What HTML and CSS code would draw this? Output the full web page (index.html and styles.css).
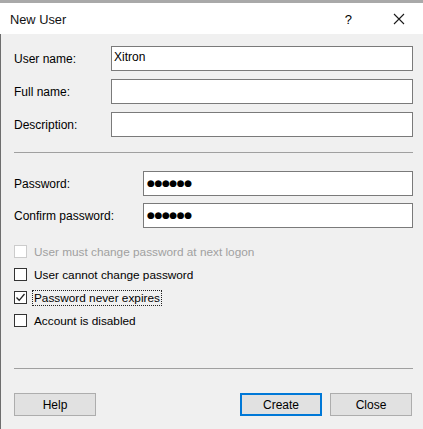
FILE: index.html
```html
<!DOCTYPE html>
<html>
    <head>
        <title>New User</title>
        <link rel="stylesheet" href="styles.css">
    </head>
    <body>
        <div class='backStrip'></div>
        <div class='dialog'>
            <div class='titleBar'>
                <span class='titleText'>New User</span>
                <span class='helpMark'>?</span>
                <svg class='closeX' viewBox='0 0 12 12' width='12' height='12'>
                    <path d='M1 1L11 11M11 1L1 11' stroke='#1a1a1a' stroke-width='1.1' fill='none'/>
                </svg>
            </div>
            <div class='client'>
                <div class='fieldGroup'>
                    <div class='fieldRow'>
                        <label class='fieldLabel nameCol'>User name:</label>
                        <div class='textBox'>Xitron</div>
                    </div>
                    <div class='fieldRow'>
                        <label class='fieldLabel nameCol'>Full name:</label>
                        <div class='textBox'></div>
                    </div>
                    <div class='fieldRow'>
                        <label class='fieldLabel nameCol'>Description:</label>
                        <div class='textBox'></div>
                    </div>
                </div>
                <div class='separator topSep'></div>
                <div class='fieldGroup passGroup'>
                    <div class='fieldRow'>
                        <label class='fieldLabel passCol'>Password:</label>
                        <div class='textBox passBox'><span class='dots'>●●●●●●</span></div>
                    </div>
                    <div class='fieldRow'>
                        <label class='fieldLabel passCol'>Confirm password:</label>
                        <div class='textBox passBox'><span class='dots'>●●●●●●</span></div>
                    </div>
                </div>
                <div class='checkList'>
                    <div class='checkRow disabled'>
                        <span class='checkBox'></span>
                        <span class='checkText'>User must change password at next logon</span>
                    </div>
                    <div class='checkRow'>
                        <span class='checkBox'></span>
                        <span class='checkText'>User cannot change password</span>
                    </div>
                    <div class='checkRow'>
                        <span class='checkBox'>
                            <svg viewBox='0 0 11 11' width='11' height='11'>
                                <path d='M1.5 5.5L4.2 8.3L9.5 2' stroke='#222' stroke-width='1.3' fill='none'/>
                            </svg>
                        </span>
                        <span class='checkText focused'>Password never expires</span>
                    </div>
                    <div class='checkRow'>
                        <span class='checkBox'></span>
                        <span class='checkText'>Account is disabled</span>
                    </div>
                </div>
                <div class='separator bottomSep'></div>
                <div class='buttonRow'>
                    <button class='winButton'>Help</button>
                    <div class='spacer'></div>
                    <button class='winButton defaultButton'>Create</button>
                    <button class='winButton'>Close</button>
                </div>
            </div>
        </div>
    </body>
</html>
```

FILE: styles.css
```css
html, body {
    margin: 0;
    width: 100%;
    height: 100%;
    background-color: #f0f0f0;
    font-family: "Liberation Sans", Arial, sans-serif;
    font-size: 12px;
    color: #000;
}
.backStrip {
    height: 3px;
    background-color: #a9a9a9;
}
.dialog {
    height: calc(100% - 3px);
    display: flex;
    flex-direction: column;
}
.titleBar {
    height: 31px;
    background-color: #fff;
    display: flex;
    align-items: center;
    padding-left: 10px;
    padding-right: 18px;
}
.titleText {
    flex-grow: 1;
    font-size: 12.8px;
    color: #111;
    margin-top: 2px;
}
.helpMark {
    font-size: 13px;
    margin-right: 41px;
    margin-top: 1px;
}
.closeX {
    margin-top: 1px;
}
.client {
    flex-grow: 1;
    border-left: 1px solid #6e6e6e;
    padding: 12px 10px 0 12px;
}
.fieldGroup {
    display: flex;
    flex-direction: column;
    gap: 8px;
}
.passGroup {
    gap: 7px;
}
.fieldRow {
    display: flex;
    align-items: center;
}
.fieldLabel {
    padding-left: 1px;
    box-sizing: border-box;
}
.nameCol {
    width: 98px;
}
.passCol {
    width: 130px;
}
.textBox {
    flex-grow: 1;
    height: 25px;
    box-sizing: border-box;
    border: 1px solid #7a7a7a;
    background-color: #fff;
    padding: 3px 0 0 2px;
    font-size: 12px;
}
.passBox {
    padding: 2px 0 0 3px;
}
.dots {
    font-family: "DejaVu Sans", sans-serif;
    font-size: 9px;
    letter-spacing: -0.4px;
    color: #000;
    position: relative;
    top: 1px;
}
.separator {
    height: 1px;
    background-color: #a0a0a0;
}
.topSep {
    margin: 15px 0 18px 1px;
}
.checkList {
    margin-top: 12px;
    font-size: 11.8px;
}
.checkRow {
    height: 23px;
    display: flex;
    align-items: center;
}
.checkBox {
    width: 13px;
    height: 13px;
    box-sizing: border-box;
    border: 1px solid #333;
    background-color: #fff;
    margin-left: 1px;
    margin-right: 5px;
    display: flex;
    align-items: center;
    justify-content: center;
}
.checkText {
    padding: 0 1px;
    border: 1px dotted transparent;
}
.checkText.focused {
    border-color: #222;
}
.disabled .checkBox {
    border-color: #cccccc;
}
.disabled .checkText {
    color: #a0a0a0;
}
.bottomSep {
    margin: 36px 0 24px 1px;
}
.buttonRow {
    display: flex;
    gap: 8px;
    padding: 0 1px 0 1px;
}
.spacer {
    flex-grow: 1;
}
.winButton {
    width: 82px;
    height: 23px;
    box-sizing: border-box;
    border: 1px solid #adadad;
    background-color: #e1e1e1;
    font-family: "Liberation Sans", Arial, sans-serif;
    font-size: 12px;
    color: #000;
    padding: 0;
}
.defaultButton {
    border: 2px solid #0078d7;
}
```
